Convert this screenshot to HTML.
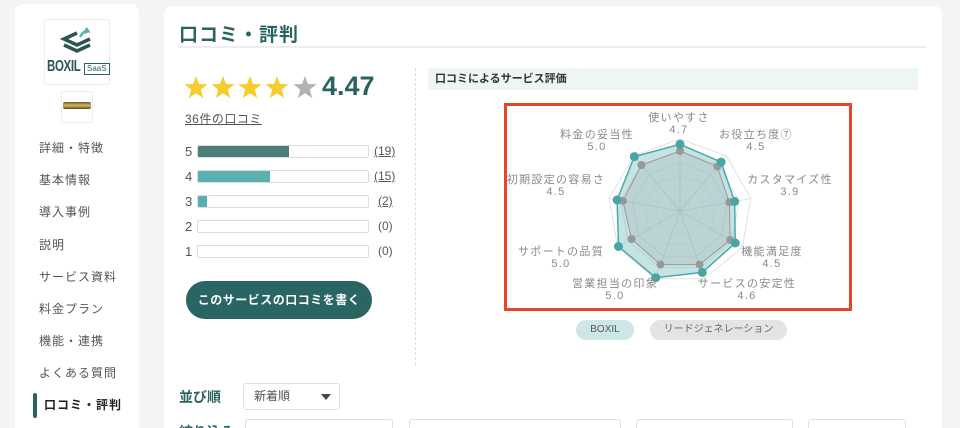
<!DOCTYPE html>
<html style="width:960px;height:428px;overflow:hidden"><head><meta charset="utf-8"><style>
*{margin:0;padding:0;box-sizing:border-box}
body{width:960px;height:428px;overflow:hidden;background:#f4f4f4;font-family:"Liberation Sans","Noto Sans CJK JP",sans-serif;position:relative;color:#333}
.abs{position:absolute}
.side{left:15px;top:4px;width:124px;height:424px;background:#fff;border-radius:8px 8px 0 0}
.main{left:164px;top:6px;width:778px;height:422px;background:#fff;border-radius:8px 8px 0 0}
.nav{left:39px;font-size:12px;color:#555;letter-spacing:1px;line-height:14px}
.bar{left:197px;width:172px;height:13px;border:1px solid #ddd;border-radius:2px;background:#fff;overflow:hidden}
.bar i{display:block;height:100%}
.num{left:185px;font-size:13px;color:#555;width:10px}
.cnt{left:374px;font-size:12px;color:#555}
.lbl{font-size:11px;color:#888;letter-spacing:1.3px;text-align:center;line-height:12px;width:130px}
</style></head><body>
<div class="abs side"></div>
<div class="abs main"></div>
<div class="abs" style="left:44px;top:19px;width:66px;height:66px;border:1px solid #eee;border-radius:3px"></div>
<svg class="abs" style="left:60px;top:27px" width="34" height="30" viewBox="0 0 34 30">
<path d="M17 6 L4 12 L17 18 L30 12" fill="none" stroke="#2a5552" stroke-width="3.5"/>
<path d="M4 18 L17 24 L30 18" fill="none" stroke="#2a5552" stroke-width="3.5"/>
<path d="M20 10 Q24 3 28 4 L26 1 M28 4 L25 6" fill="none" stroke="#5aafb0" stroke-width="2.5"/>
</svg>
<div class="abs" style="left:47px;top:58px;font-size:16px;font-weight:bold;color:#2a5552;letter-spacing:-0.5px;transform:scaleX(0.72);transform-origin:left">BOXIL</div>
<div class="abs" style="left:84px;top:63px;font-size:8px;color:#2a6461;border:1px solid #2a6461;padding:0 2px;line-height:10px">SaaS</div>
<div class="abs" style="left:61px;top:91px;width:32px;height:32px;border:1px solid #eee;border-radius:2px"></div>
<div class="abs" style="left:63px;top:102px;width:28px;height:7px;background:linear-gradient(#6b5a30,#d8b860,#5a4a20);border-radius:2px"></div>
<div class="abs nav" style="top:141px">詳細・特徴</div>
<div class="abs nav" style="top:173px">基本情報</div>
<div class="abs nav" style="top:205px">導入事例</div>
<div class="abs nav" style="top:238px">説明</div>
<div class="abs nav" style="top:270px">サービス資料</div>
<div class="abs nav" style="top:302px">料金プラン</div>
<div class="abs nav" style="top:334px">機能・連携</div>
<div class="abs nav" style="top:366px">よくある質問</div>
<div class="abs" style="left:33px;top:393px;width:4px;height:25px;background:#2a6461;border-radius:2px"></div>
<div class="abs nav" style="left:44px;top:398px;color:#222;font-weight:bold">口コミ・評判</div>
<div class="abs" style="left:179px;top:20px;font-size:19px;font-weight:bold;color:#2a6461;letter-spacing:1px">口コミ・評判</div>
<div class="abs" style="left:178px;top:46px;width:748px;height:2px;background:#eee"></div>
<svg class="abs" style="left:184px;top:73px" width="136" height="28" viewBox="0 0 136 28">
<defs><path id="s" d="M12 1 L15 9 L23.5 9.3 L16.8 14.6 L19.2 23 L12 18.2 L4.8 23 L7.2 14.6 L0.5 9.3 L9 9 Z"/></defs>
<use href="#s" x="0" y="2" fill="#f7cc2e"/><use href="#s" x="27" y="2" fill="#f7cc2e"/><use href="#s" x="54" y="2" fill="#f7cc2e"/><use href="#s" x="81" y="2" fill="#f7cc2e"/><use href="#s" x="109" y="2" fill="#b3b3b3"/>
</svg>
<div class="abs" style="left:322px;top:71px;font-size:27px;font-weight:bold;color:#2a6461">4.47</div>
<div class="abs" style="left:185px;top:110px;font-size:12px;color:#555;text-decoration:underline;letter-spacing:0.5px">36件の口コミ</div>
<div class="abs num" style="top:144px">5</div><div class="abs bar" style="top:145px"><i style="width:91px;background:#4e7e7a"></i></div><div class="abs cnt" style="top:144px;text-decoration:underline">(19)</div>
<div class="abs num" style="top:169px">4</div><div class="abs bar" style="top:170px"><i style="width:72px;background:#5aafb0"></i></div><div class="abs cnt" style="top:169px;text-decoration:underline">(15)</div>
<div class="abs num" style="top:194px">3</div><div class="abs bar" style="top:195px"><i style="width:9px;background:#5aafb0"></i></div><div class="abs cnt" style="top:194px;left:378px;text-decoration:underline">(2)</div>
<div class="abs num" style="top:219px">2</div><div class="abs bar" style="top:220px"></div><div class="abs cnt" style="top:219px;left:378px">(0)</div>
<div class="abs num" style="top:244px">1</div><div class="abs bar" style="top:245px"></div><div class="abs cnt" style="top:244px;left:378px">(0)</div>
<div class="abs" style="left:186px;top:281px;width:186px;height:38px;background:#286563;border-radius:19px;color:#fff;font-size:12px;font-weight:bold;text-align:center;line-height:38px;letter-spacing:0.5px">このサービスの口コミを書く</div>
<div class="abs" style="left:415px;top:68px;height:297px;border-left:1px dashed #ddd"></div>
<div class="abs" style="left:428px;top:68px;width:490px;height:22px;background:#eef5f5;font-size:11px;font-weight:bold;color:#333;line-height:22px;padding-left:7px">口コミによるサービス評価</div>
<div class="abs" style="left:504px;top:103px;width:348px;height:208px;border:3px solid #e8442c"></div>
<svg class="abs" style="left:0;top:0" width="960" height="428">
<defs><polygon id="g" points="0,-72 46.3,-55.2 70.9,-12.5 62.4,36 24.6,67.7 -24.6,67.7 -62.4,36 -70.9,-12.5 -46.3,-55.2"/></defs>
<g transform="translate(680,211)" fill="none" stroke="#e2e2e2" stroke-width="1">
<use href="#g"/>
<use href="#g" transform="scale(0.833)"/>
<use href="#g" transform="scale(0.667)"/>
<use href="#g" transform="scale(0.5)"/>
<use href="#g" transform="scale(0.333)"/>
<use href="#g" transform="scale(0.167)"/>
<path d="M0,0L0,-72M0,0L46.3,-55.2M0,0L70.9,-12.5M0,0L62.4,36M0,0L24.6,67.7M0,0L-24.6,67.7M0,0L-62.4,36M0,0L-70.9,-12.5M0,0L-46.3,-55.2"/>
</g>
<polygon points="680,144.3 721.1,162.1 734.6,201.4 735.3,243 702.3,272.4 655.7,277.7 618.5,246.5 617.1,199.9 634.3,156.6" fill="rgba(90,175,176,0.35)" stroke="#4fa9a9" stroke-width="1.5"/>
<polygon points="680,151 717.3,166.6 729.3,202.3 730.2,240 699.5,264.6 660.5,264.6 631.5,239 622.9,200.9 641.4,165" fill="rgba(150,150,150,0.2)" stroke="#999" stroke-width="1"/>
<g fill="#999"><circle cx="680" cy="151" r="4"/><circle cx="717.3" cy="166.6" r="4"/><circle cx="729.3" cy="202.3" r="4"/><circle cx="730.2" cy="240" r="4"/><circle cx="699.5" cy="264.6" r="4"/><circle cx="660.5" cy="264.6" r="4"/><circle cx="631.5" cy="239" r="4"/><circle cx="622.9" cy="200.9" r="4"/><circle cx="641.4" cy="165" r="4"/></g>
<g fill="#47a5a6"><circle cx="680" cy="144.3" r="4.5"/><circle cx="721.1" cy="162.1" r="4.5"/><circle cx="734.6" cy="201.4" r="4.5"/><circle cx="735.3" cy="243" r="4.5"/><circle cx="702.3" cy="272.4" r="4.5"/><circle cx="655.7" cy="277.7" r="4.5"/><circle cx="618.5" cy="246.5" r="4.5"/><circle cx="617.1" cy="199.9" r="4.5"/><circle cx="634.3" cy="156.6" r="4.5"/></g>
</svg>
<div class="abs lbl" style="left:614px;top:112px">使いやすさ<br>4.7</div>
<div class="abs lbl" style="left:691px;top:129px">お役立ち度⑦<br>4.5</div>
<div class="abs lbl" style="left:725px;top:174px">カスタマイズ性<br>3.9</div>
<div class="abs lbl" style="left:707px;top:246px">機能満足度<br>4.5</div>
<div class="abs lbl" style="left:682px;top:278px">サービスの安定性<br>4.6</div>
<div class="abs lbl" style="left:550px;top:278px">営業担当の印象<br>5.0</div>
<div class="abs lbl" style="left:496px;top:246px">サポートの品質<br>5.0</div>
<div class="abs lbl" style="left:491px;top:174px">初期設定の容易さ<br>4.5</div>
<div class="abs lbl" style="left:532px;top:129px">料金の妥当性<br>5.0</div>
<div class="abs" style="left:576px;top:320px;width:58px;height:20px;background:#cde6e6;border-radius:10px;font-size:10px;color:#555;text-align:center;line-height:20px">BOXIL</div>
<div class="abs" style="left:650px;top:320px;width:137px;height:20px;background:#e4e4e4;border-radius:10px;font-size:10px;color:#666;text-align:center;line-height:20px">リードジェネレーション</div>
<div class="abs" style="left:179px;top:387px;font-size:14px;font-weight:bold;color:#2a6461">並び順</div>
<div class="abs" style="left:243px;top:383px;width:97px;height:27px;border:1px solid #e0e0e0;border-radius:3px;font-size:12px;color:#555;line-height:25px;padding-left:10px">新着順</div>
<div class="abs" style="left:321px;top:394px;width:0;height:0;border-left:5px solid transparent;border-right:5px solid transparent;border-top:6px solid #444"></div>
<div class="abs" style="left:179px;top:422px;font-size:14px;font-weight:bold;color:#2a6461">絞り込み</div>
<div class="abs" style="left:245px;top:419px;width:148px;height:30px;border:1px solid #e0e0e0;border-radius:3px"></div>
<div class="abs" style="left:409px;top:419px;width:212px;height:30px;border:1px solid #e0e0e0;border-radius:3px"></div>
<div class="abs" style="left:636px;top:419px;width:157px;height:30px;border:1px solid #e0e0e0;border-radius:3px"></div>
<div class="abs" style="left:808px;top:419px;width:98px;height:30px;border:1px solid #e0e0e0;border-radius:3px"></div>
</body></html>
